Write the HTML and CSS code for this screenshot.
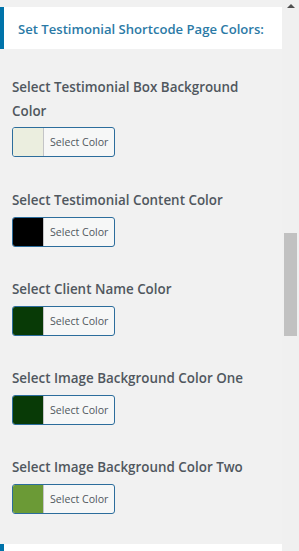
FILE: index.html
```html
<!DOCTYPE html>
<html lang="en">
<head>
    <meta charset="UTF-8">
    <meta name="viewport" content="width=device-width, initial-scale=1.0">
    <title>Testimonial Colors</title>
    <link rel="stylesheet" href="styles.css">
</head>
<body>

<div class="frame">
    <div class="panel">
        <div class="panel-head">Set Testimonial Shortcode Page Colors:</div>

        <div class="field first">
            <div class="field-label">Select Testimonial Box Background Color</div>
            <button class="color-btn" type="button">
                <span class="swatch" style="background-color: #ebeedf;"></span>
                <span class="btn-text">Select Color</span>
            </button>
        </div>

        <div class="field">
            <div class="field-label">Select Testimonial Content Color</div>
            <button class="color-btn" type="button">
                <span class="swatch" style="background-color: #000000;"></span>
                <span class="btn-text">Select Color</span>
            </button>
        </div>

        <div class="field">
            <div class="field-label">Select Client Name Color</div>
            <button class="color-btn" type="button">
                <span class="swatch" style="background-color: #083a06;"></span>
                <span class="btn-text">Select Color</span>
            </button>
        </div>

        <div class="field">
            <div class="field-label">Select Image Background Color One</div>
            <button class="color-btn" type="button">
                <span class="swatch" style="background-color: #083a06;"></span>
                <span class="btn-text">Select Color</span>
            </button>
        </div>

        <div class="field">
            <div class="field-label">Select Image Background Color Two</div>
            <button class="color-btn" type="button">
                <span class="swatch" style="background-color: #6b9a36;"></span>
                <span class="btn-text">Select Color</span>
            </button>
        </div>

        <div class="panel-head next"></div>
    </div>

    <div class="scrollbar">
        <div class="scroll-arrow"></div>
        <div class="scroll-thumb"></div>
    </div>
</div>

</body>
</html>
```

FILE: styles.css
```css
:root {
    --bg-color: #f1f1f1;
    --text-color: #50575e;
    --blue: #0073aa;
    --head-blue: #2b7aa6;
    --btn-border: #2c6d9c;
}
body {
    background-color: var(--bg-color);
    color: var(--text-color);
    font-family: 'Open Sans', 'Noto Sans', sans-serif;
    margin: 0;
    overflow: hidden;
}
.frame {
    display: flex;
    height: 551px;
}
.panel {
    width: 282px;
    padding-top: 7px;
}
.panel-head {
    background-color: #fff;
    border-left: 4px solid var(--blue);
    height: 42px;
    padding-left: 14px;
    line-height: 44px;
    font-size: 13.1px;
    font-weight: 600;
    color: var(--head-blue);
    margin-bottom: 26px;
}
.panel-head.next { margin-top: 2px; }
.field {
    padding-left: 12px;
    margin-bottom: 30px;
}
.field.first { margin-bottom: 31px; }
.field-label {
    width: 240px;
    font-size: 13.4px;
    font-weight: 600;
    line-height: 24px;
    margin-bottom: 5px;
}
.field.first .field-label { margin-bottom: 4px; }
.color-btn {
    display: flex;
    padding: 0;
    height: 30px;
    width: 103px;
    border: 1px solid var(--btn-border);
    border-radius: 3px;
    overflow: hidden;
    background-color: #f6f7f7;
    font-family: inherit;
}
.swatch {
    width: 30px;
    height: 100%;
    border-right: 1px solid #c3c4c7;
}
.btn-text {
    flex: 1;
    line-height: 28px;
    font-size: 10.6px;
    color: var(--text-color);
    text-align: left;
    padding-left: 6px;
}
.scrollbar {
    width: 17px;
    background-color: #f0f0f0;
    position: relative;
}
.scroll-arrow {
    width: 0;
    height: 0;
    margin: 4px auto 0;
    border-left: 4px solid transparent;
    border-right: 4px solid transparent;
    border-bottom: 4px solid #505050;
}
.scroll-thumb {
    position: absolute;
    top: 233px;
    left: 2px;
    width: 13px;
    height: 103px;
    background-color: #c1c1c1;
}
```
